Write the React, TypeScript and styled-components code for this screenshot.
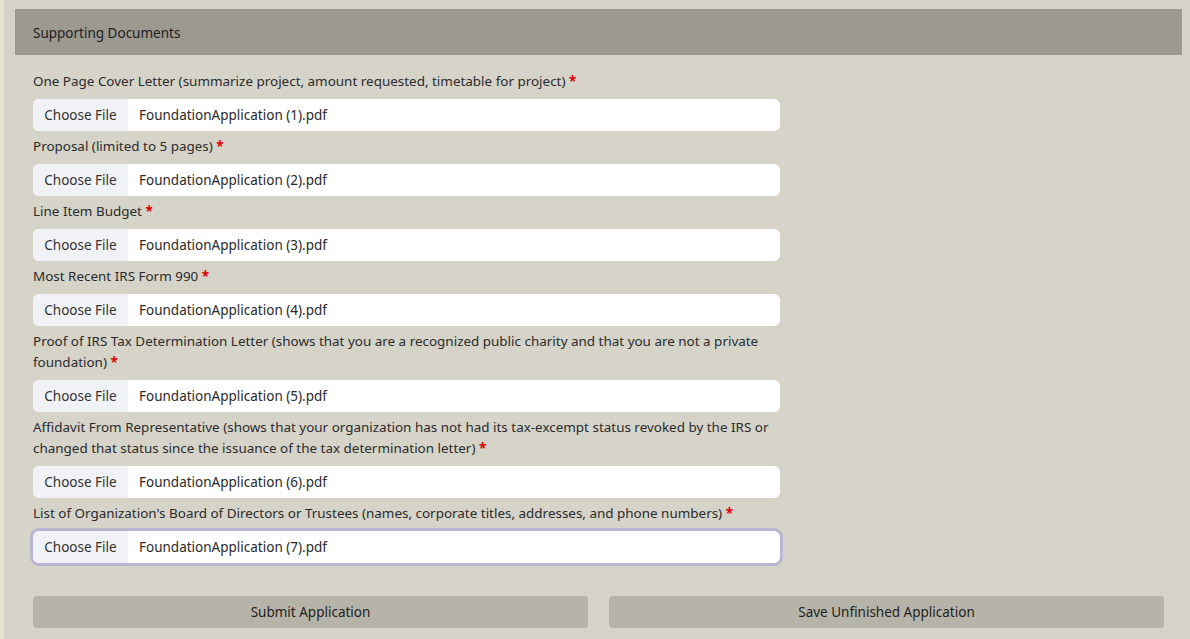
import React from "react";
import styled, { createGlobalStyle } from "styled-components";

const GlobalStyle = createGlobalStyle`
    html, body {
        margin: 0;
        padding: 0;
        background: #d6d4c8;
        font-family: "Noto Sans", "Open Sans", sans-serif;
        color: #2b2b2f;
    }
    * { box-sizing: border-box; }
`;

const Page = styled.div`
    min-height: 639px;
    border-left: 4px solid #e5e3cf;
    padding: 9px 8px 0 11px;
`;

const Header = styled.div`
    height: 46px;
    background: #9c9990;
    display: flex;
    align-items: center;
    padding: 1px 18px 0;
    font-size: 13.5px;
    color: #1e1e1e;
`;

const Body = styled.div`
    padding: 16px 18px 0 18px;
`;

const Fields = styled.div`
    width: 747px;
`;

const Label = styled.div`
    font-size: 13.45px;
    line-height: 21px;
    margin-bottom: 7px;
`;

const Star = styled.span`
    color: #e00000;
    font-weight: 700;
`;

const FileBox = styled.div<{ $focused?: boolean }>`
    height: 32px;
    display: flex;
    align-items: stretch;
    background: #fff;
    border-radius: 6px;
    overflow: hidden;
    margin-bottom: 5px;
    font-size: 13.5px;
    box-shadow: ${p => (p.$focused ? "0 0 0 3px #bab5d1" : "none")};
`;

const ChooseButton = styled.div`
    width: 95px;
    background: #f1f2f6;
    display: flex;
    align-items: center;
    justify-content: center;
    color: #333;
`;

const FileName = styled.div`
    display: flex;
    align-items: center;
    padding-left: 11px;
    color: #2a2a2a;
`;

const Actions = styled.div`
    display: grid;
    grid-template-columns: 1fr 1fr;
    gap: 21px;
    margin-top: 33px;
`;

const ActionButton = styled.button`
    height: 32px;
    border: none;
    border-radius: 4px;
    background: #b6b4a8;
    font-family: inherit;
    font-size: 13.5px;
    color: #1e1e1e;
`;

const documents = [
    "One Page Cover Letter (summarize project, amount requested, timetable for project)",
    "Proposal (limited to 5 pages)",
    "Line Item Budget",
    "Most Recent IRS Form 990",
    "Proof of IRS Tax Determination Letter (shows that you are a recognized public charity and that you are not a private foundation)",
    "Affidavit From Representative (shows that your organization has not had its tax-excempt status revoked by the IRS or changed that status since the issuance of the tax determination letter)",
    "List of Organization's Board of Directors or Trustees (names, corporate titles, addresses, and phone numbers)",
];

const App = () => {
    return (
        <Page>
            <GlobalStyle />
            <Header>Supporting Documents</Header>
            <Body>
                <Fields>
                    {documents.map((doc, i) => (
                        <div key={i}>
                            <Label>{doc} <Star>*</Star></Label>
                            <FileBox $focused={i === documents.length - 1}>
                                <ChooseButton>Choose File</ChooseButton>
                                <FileName>FoundationApplication ({i + 1}).pdf</FileName>
                            </FileBox>
                        </div>
                    ))}
                </Fields>
                <Actions>
                    <ActionButton>Submit Application</ActionButton>
                    <ActionButton>Save Unfinished Application</ActionButton>
                </Actions>
            </Body>
        </Page>
    );
};

export default App;
